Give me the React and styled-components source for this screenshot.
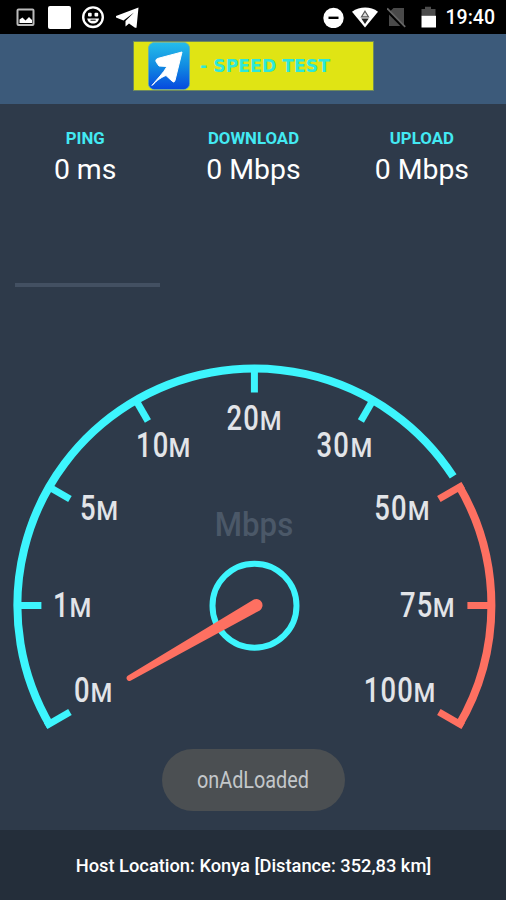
import React from 'react';
import styled, { createGlobalStyle } from 'styled-components';

const CYAN = '#3df5fd';
const RED = '#fe7061';

const GlobalStyle = createGlobalStyle`
  * { box-sizing: border-box; }
  body { margin: 0; background: #2e3a4a; }
`;

const Screen = styled.div`
  position: relative;
  display: flex;
  flex-direction: column;
  width: 506px;
  height: 900px;
  overflow: hidden;
  background: #2e3a4a;
  color: #fff;
  font-family: Roboto, sans-serif;
`;

const StatusBar = styled.header`
  display: flex;
  align-items: center;
  justify-content: space-between;
  flex: none;
  height: 34px;
  padding: 0 11px 0 16px;
  background: #000;
`;

const StatusGroup = styled.div`
  display: flex;
  align-items: center;
  gap: ${(p) => p.$gap}px;
`;

const Clock = styled.span`
  font-size: 19.5px;
  font-weight: 500;
  line-height: 34px;
  padding-top: 2px;
`;

const AdBar = styled.div`
  display: flex;
  justify-content: center;
  flex: none;
  height: 70px;
  padding: 7px 0 0 1px;
  background: #3c5a7a;
`;

const Banner = styled.div`
  display: flex;
  align-items: center;
  width: 241px;
  height: 50px;
  padding-left: 14px;
  gap: 10px;
  background: #e0e414;
  border: 1px solid #6f8a5c;
`;

const BannerText = styled.span`
  color: #2ee8d8;
  font: bold 17.3px/24px 'DejaVu Sans', sans-serif;
  white-space: pre;
`;

const Stats = styled.section`
  display: grid;
  grid-template-columns: repeat(3, 1fr);
  flex: none;
  height: 179px;
  padding: 23px 0 0 1px;
`;

const Stat = styled.div`
  display: flex;
  flex-direction: column;
  align-items: center;
`;

const StatLabel = styled.span`
  color: #43e9f3;
  font-size: 16.8px;
  font-weight: 700;
  line-height: 23px;
`;

const StatValue = styled.span`
  font-size: 28.4px;
  line-height: 39px;
`;

const Divider = styled.div`
  flex: none;
  width: 145px;
  height: 4px;
  margin-left: 15px;
  background: #435062;
`;

const Gauge = styled.svg`
  display: block;
  flex: none;
  margin-top: 63px;
`;

const Toast = styled.div`
  position: absolute;
  left: 162px;
  top: 749px;
  width: 183px;
  height: 62px;
  border-radius: 31px;
  background: #4b4f52;
`;

const Footer = styled.footer`
  display: flex;
  align-items: center;
  justify-content: center;
  flex: none;
  height: 70px;
  margin-top: auto;
  padding-left: 1px;
  background: #242e3a;
  font-size: 18.3px;
  font-weight: 500;
  white-space: pre;
`;

const CX = 254.4;
const CY = 605.5;
const R = 237;

const point = (deg, r) => {
  const a = (deg * Math.PI) / 180;
  return [CX + r * Math.cos(a), CY - r * Math.sin(a)];
};

const arc = (from, to) => {
  const [x1, y1] = point(from, R);
  const [x2, y2] = point(to, R);
  const large = from - to > 180 ? 1 : 0;
  return `M${x1} ${y1}A${R} ${R} 0 ${large} 1 ${x2} ${y2}`;
};

const tick = (deg, outer) => {
  const [x1, y1] = point(deg, outer);
  const [x2, y2] = point(deg, 213);
  return `M${x1} ${y1}L${x2} ${y2}`;
};

const TICKS = [
  { deg: 210, color: CYAN, outer: 241 },
  { deg: 180, color: CYAN, outer: 237 },
  { deg: 150, color: CYAN, outer: 237 },
  { deg: 120, color: CYAN, outer: 237 },
  { deg: 90, color: CYAN, outer: 237 },
  { deg: 60, color: CYAN, outer: 237 },
  { deg: 30, color: RED, outer: 241 },
  { deg: 0, color: RED, outer: 237 },
  { deg: -30, color: RED, outer: 241 },
];

// x is where the digits begin, mx where the unit letter begins.
const LABELS = [
  { value: '0', x: 74, mx: 90.6, y: 701.7 },
  { value: '1', x: 53, mx: 69.6, y: 616.7 },
  { value: '5', x: 80, mx: 96.2, y: 520 },
  { value: '10', x: 136, mx: 168.6, y: 456.7 },
  { value: '20', x: 226.5, mx: 259.8, y: 429.6 },
  { value: '30', x: 316.5, mx: 350.4, y: 456.7 },
  { value: '50', x: 374.2, mx: 407.8, y: 520 },
  { value: '75', x: 400, mx: 432.8, y: 616.7 },
  { value: '100', x: 363.7, mx: 413.4, y: 701.7 },
];

function SpeedGauge() {
  return (
    <Gauge width="506" height="390" viewBox="0 350 506 390" fill="none">
      <path d={arc(210.7, 33)} stroke={CYAN} strokeWidth="8" />
      <path d={arc(30.7, -30.7)} stroke={RED} strokeWidth="8" />
      {TICKS.map((t) => (
        <path key={t.deg} d={tick(t.deg, t.outer)} stroke={t.color} strokeWidth="7" />
      ))}
      <g fill="#e2e4e8" fontFamily="Roboto, sans-serif" fontWeight="500">
        {LABELS.map((l) => (
          <g key={l.value}>
            <text transform={`translate(${l.x} ${l.y}) scale(.8 1)`} fontSize="34.3" letterSpacing="1.5">
              {l.value}
            </text>
            <text x={l.mx} y={l.y} fontSize="25">M</text>
          </g>
        ))}
      </g>
      <text x="214.8" y="535.7" fill="#4b5868" fontFamily="Roboto, sans-serif" fontWeight="500" fontSize="34" textLength="78.4" lengthAdjust="spacingAndGlyphs">
        Mbps
      </text>
      <circle cx="254.5" cy="605.7" r="42" stroke={CYAN} strokeWidth="6" />
      <path d="M127.7 675.8L253.4 599.8A6.2 6.2 0 0 1 259.8 610.4L130.5 680.8A2.9 2.9 0 0 1 127.7 675.8Z" fill={RED} />
    </Gauge>
  );
}

function StatusIcons() {
  return (
    <StatusGroup $gap={12}>
      <svg width="20" height="20" viewBox="0 0 20 20">
        <rect x="1.5" y="2.5" width="16" height="15.5" rx="1" fill="none" stroke="#bbb" strokeWidth="2" />
        <path d="M3.5 16V12.5l3-2 3 3 3.5-3.5 3 3V16Z" fill="#fff" />
      </svg>
      <svg width="23" height="23" viewBox="0 0 23 23">
        <rect width="23" height="23" rx="2" fill="#fff" />
      </svg>
      <svg width="21" height="23" viewBox="0 0 21 23" overflow="visible">
        <circle cx="10" cy="11.2" r="9.8" fill="none" stroke="#fff" strokeWidth="2.4" />
        <rect x="5" y="6.7" width="3.7" height="3.7" rx="1" fill="#fff" />
        <rect x="11.5" y="6.7" width="3.7" height="3.7" rx="1" fill="#fff" />
        <path d="M4.2 12.5h11.8c-.4 3-2.8 5-5.9 5s-5.5-2-5.900-5Z" fill="#fff" />
        <path d="M7.5 14.2h5.2" stroke="#000" strokeWidth="1" />
      </svg>
      <svg width="23" height="21" viewBox="0 0 23 21">
        <path d="M22.5 .5 0 9v1.500l7.500 3L18 5.500 9.500 14v5.500l3.500-3 6 4.300h1.500Z" fill="#fff" />
      </svg>
    </StatusGroup>
  );
}

function SystemIcons() {
  return (
    <StatusGroup $gap={8}>
      <svg width="21" height="22" viewBox="0 0 21 22">
        <circle cx="10.5" cy="12" r="10.2" fill="#fff" />
        <path d="M5.5 11.8h10" stroke="#000" strokeWidth="2.4" />
      </svg>
      <svg width="27" height="22" viewBox="0 0 27 22">
        <path d="M0 5.8C8 .2 18.500 .2 26 5.800L13 21.500Z" fill="#fff" />
        <path d="M13 5.200 16.500 10.800H9.500Z" fill="#ddd" stroke="#555" strokeWidth="1.200" />
        <path d="M9.300 12.400h7.400L13 18Z" fill="#222" />
      </svg>
      <svg width="19" height="22" viewBox="0 0 19 22">
        <path d="M6.500 2H17v18H2V6.500Z" fill="#4a4a4a" />
        <path d="M-1 3.800 17 22" stroke="#000" strokeWidth="2.400" />
        <path d="M.2 2.400 18.200 20.800" stroke="#656565" strokeWidth="1.700" />
      </svg>
      <svg width="26" height="22" viewBox="-1 0 26 22">
        <path d="M6.500 3h3.500V.8h6V3h4.500v7.200H6.500V3Z" fill="#4c4c4c" />
        <path d="M6.500 9.800H21V21.500H6.500Z" fill="#fff" />
      </svg>
    </StatusGroup>
  );
}

function AppLogo() {
  return (
    <svg width="42" height="48" viewBox="0 0 42 48">
      <defs>
        <linearGradient id="logo" x1="0" y1="0" x2="0" y2="1">
          <stop offset="0" stopColor="#25bdea" />
          <stop offset="0.5" stopColor="#118be2" />
          <stop offset="1" stopColor="#0648df" />
        </linearGradient>
      </defs>
      <rect x="0.4" y="0.4" width="41.2" height="47.2" rx="6" fill="url(#logo)" stroke="#6daeb0" strokeWidth="0.8" />
      <path d="M34 10 9.5 16.500C7.500 17.500 7.500 19 8.500 20.500L11 24 19 24.500C15.500 31 9 37 4 43.500 9 38 14 35 18 33.500L24.500 39.500C26 40.500 26.500 40 27 38.500Z" fill="#fff" stroke="#fff" strokeWidth="1" strokeLinejoin="round" />
    </svg>
  );
}

export default function App() {
  return (
    <Screen>
      <GlobalStyle />
      <StatusBar>
        <StatusIcons />
        <StatusGroup $gap={6}>
          <SystemIcons />
          <Clock>19:40</Clock>
        </StatusGroup>
      </StatusBar>
      <AdBar>
        <Banner>
          <AppLogo />
          <BannerText>- SPEED TEST</BannerText>
        </Banner>
      </AdBar>
      <Stats>
        <Stat>
          <StatLabel>PING</StatLabel>
          <StatValue>0 ms</StatValue>
        </Stat>
        <Stat>
          <StatLabel>DOWNLOAD</StatLabel>
          <StatValue>0 Mbps</StatValue>
        </Stat>
        <Stat>
          <StatLabel>UPLOAD</StatLabel>
          <StatValue>0 Mbps</StatValue>
        </Stat>
      </Stats>
      <Divider />
      <SpeedGauge />
      <Toast>
        <svg width="183" height="62" viewBox="0 0 183 62">
          <text x="35" y="39" fill="#c3c7ca" fontFamily="Roboto, sans-serif" fontSize="23.5" textLength="112" lengthAdjust="spacingAndGlyphs">
            onAdLoaded
          </text>
        </svg>
      </Toast>
      <Footer>Host Location: Konya [Distance: 352,83 km]</Footer>
    </Screen>
  );
}
